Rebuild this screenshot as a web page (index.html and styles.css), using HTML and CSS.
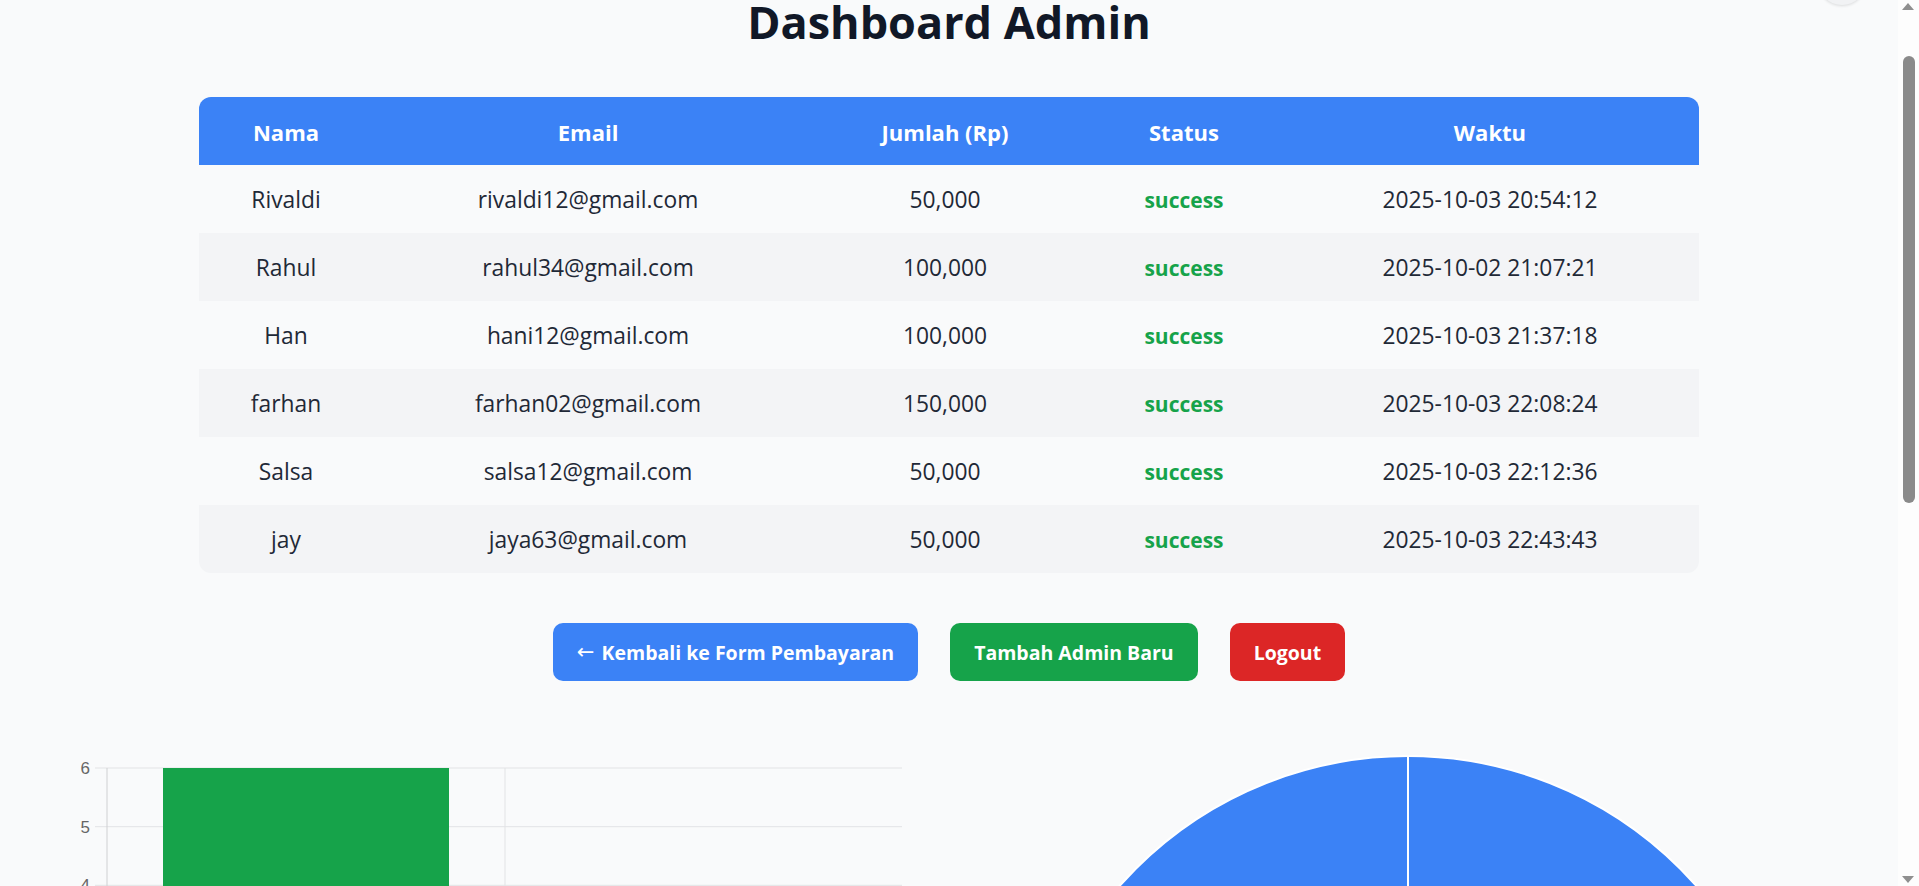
FILE: index.html
```html
<!DOCTYPE html>
<html lang="id">
<head>
<meta charset="utf-8">
<title>Dashboard Admin</title>
<link rel="stylesheet" href="styles.css">
</head>
<body>
<div class="corner-btn" aria-hidden="true"></div>

<h1 class="title">Dashboard Admin</h1>

<div class="table-wrap">
  <table class="data-table">
    <colgroup>
      <col class="c-nama"><col class="c-email"><col class="c-jumlah"><col class="c-status"><col class="c-waktu">
    </colgroup>
    <thead>
      <tr><th>Nama</th><th>Email</th><th>Jumlah (Rp)</th><th>Status</th><th>Waktu</th></tr>
    </thead>
    <tbody>
      <tr><td>Rivaldi</td><td>rivaldi12@gmail.com</td><td>50,000</td><td class="status">success</td><td>2025-10-03 20:54:12</td></tr>
      <tr><td>Rahul</td><td>rahul34@gmail.com</td><td>100,000</td><td class="status">success</td><td>2025-10-02 21:07:21</td></tr>
      <tr><td>Han</td><td>hani12@gmail.com</td><td>100,000</td><td class="status">success</td><td>2025-10-03 21:37:18</td></tr>
      <tr><td>farhan</td><td>farhan02@gmail.com</td><td>150,000</td><td class="status">success</td><td>2025-10-03 22:08:24</td></tr>
      <tr><td>Salsa</td><td>salsa12@gmail.com</td><td>50,000</td><td class="status">success</td><td>2025-10-03 22:12:36</td></tr>
      <tr><td>jay</td><td>jaya63@gmail.com</td><td>50,000</td><td class="status">success</td><td>2025-10-03 22:43:43</td></tr>
    </tbody>
  </table>
</div>

<div class="actions">
  <a class="btn btn-blue" href="#"><span class="arrow">←</span> Kembali ke Form Pembayaran</a>
  <a class="btn btn-green" href="#">Tambah Admin Baru</a>
  <a class="btn btn-red" href="#">Logout</a>
</div>

<div class="charts">
  <div class="chart chart-bar">
    <svg class="chart-svg" width="845" height="422" viewBox="0 0 845 422">
      <g class="grid">
        <line x1="35" y1="28" x2="842" y2="28"/>
        <line x1="35" y1="86.7" x2="842" y2="86.7"/>
        <line x1="35" y1="145.3" x2="842" y2="145.3"/>
        <line x1="35" y1="204" x2="842" y2="204"/>
        <line x1="35" y1="262.7" x2="842" y2="262.7"/>
        <line x1="35" y1="321.3" x2="842" y2="321.3"/>
        <line x1="445" y1="28" x2="445" y2="388"/>
      </g>
      <line class="axis" x1="47" y1="28" x2="47" y2="388"/>
      <line class="axis" x1="47" y1="380" x2="842" y2="380"/>
      <rect class="bar" x="103" y="28" width="286" height="352"/>
      <g class="ticks">
        <text x="30" y="34">6</text>
        <text x="30" y="92.7">5</text>
        <text x="30" y="151.3">4</text>
        <text x="30" y="210">3</text>
        <text x="30" y="268.7">2</text>
        <text x="30" y="327.3">1</text>
        <text x="30" y="386">0</text>
      </g>
      <g class="cats">
        <text x="246" y="408">success</text>
        <text x="643" y="408">pending</text>
      </g>
    </svg>
  </div>
  <div class="chart chart-pie">
    <svg class="chart-svg" width="845" height="800" viewBox="0 0 845 800">
      <circle class="pie" cx="422" cy="401" r="385"/>
      <line class="pie-sep" x1="422" y1="401" x2="422" y2="15"/>
    </svg>
  </div>
</div>

<div class="scrollbar" aria-hidden="true">
  <svg class="sb-arrow" width="21" height="12" viewBox="0 0 21 12"><polygon points="4,10 16,10 10,3"/></svg>
  <div class="sb-thumb"></div>
  <svg class="sb-arrow sb-down" width="21" height="12" viewBox="0 0 21 12"><polygon points="4,2 16,2 10,9"/></svg>
</div>

<script src="script.js"></script>
</body>
</html>
```

FILE: styles.css
```css
html {
  scroll-behavior: auto;
}

body {
  position: relative;
  margin: 0;
  padding: 70px 21px 70px 0;
  background: #f9fafb;
  font-family: "Open Sans", "Noto Sans", sans-serif;
  color: #1f2937;
}

.corner-btn {
  position: absolute;
  top: 32px;
  right: 53px;
  width: 48px;
  height: 48px;
  border-radius: 50%;
  background: #f1f2f4;
  box-shadow: 0 1px 3px rgba(0, 0, 0, 0.12);
}

.title {
  margin: 0 0 48px;
  font-size: 45px;
  line-height: 54px;
  font-weight: 700;
  text-align: center;
  color: #111827;
}

.table-wrap {
  max-width: 1500px;
  margin: 0 auto;
  border-radius: 12px;
  overflow: hidden;
}

.data-table {
  width: 100%;
  border-collapse: separate;
  border-spacing: 0;
  table-layout: fixed;
}

.c-nama { width: 11.6%; }
.c-email { width: 28.67%; }
.c-jumlah { width: 18.93%; }
.c-status { width: 12.93%; }
.c-waktu { width: 27.87%; }

.data-table th,
.data-table td {
  padding: 21px 8px 19px;
  line-height: 28px;
  text-align: center;
  white-space: nowrap;
}

.data-table th {
  background: #3b82f6;
  color: #ffffff;
  font-size: 22px;
  font-weight: 700;
}

.data-table td {
  font-size: 22.8px;
  color: #1f2937;
}

.data-table tbody tr:nth-child(even) td {
  background: #f3f4f6;
}

.data-table td.status {
  color: #16a34a;
  font-weight: 700;
  font-size: 21px;
}

.actions {
  display: flex;
  justify-content: center;
  gap: 32px;
  margin-top: 50px;
}

.btn {
  display: inline-flex;
  align-items: center;
  height: 58px;
  padding: 0 24px;
  box-sizing: border-box;
  border-radius: 10px;
  font-size: 19.5px;
  font-weight: 700;
  color: #ffffff;
  text-decoration: none;
  white-space: pre;
}

.arrow {
  font-family: "DejaVu Sans", sans-serif;
  font-weight: 400;
  font-size: 21px;
  margin-right: 2px;
}

.btn-blue { background: #3b82f6; }
.btn-green { background: #16a34a; }
.btn-red { background: #dc2626; }

.charts {
  display: flex;
  justify-content: space-between;
  align-items: flex-start;
  margin-top: 59px;
  padding: 0 67px 0 60px;
}

.chart-svg {
  display: block;
}

.grid line {
  stroke: #e2e3e5;
  stroke-width: 1;
}

.axis {
  stroke: #cfd0d2;
  stroke-width: 1;
}

.bar {
  fill: #16a34a;
}

.ticks text {
  font-family: "Liberation Sans", Arial, sans-serif;
  font-size: 17px;
  fill: #666666;
  text-anchor: end;
}

.cats text {
  font-family: "Liberation Sans", Arial, sans-serif;
  font-size: 17px;
  fill: #666666;
  text-anchor: middle;
}

.pie {
  fill: #3b82f6;
  stroke: #ffffff;
  stroke-width: 2;
}

.pie-sep {
  stroke: #ffffff;
  stroke-width: 2;
}

.scrollbar {
  position: fixed;
  top: 0;
  right: 0;
  width: 21px;
  height: 100vh;
  display: flex;
  flex-direction: column;
  background: #fdfdfd;
}

.sb-arrow {
  display: block;
  flex: none;
}

.sb-arrow polygon {
  fill: #8f8f8f;
}

.sb-thumb {
  flex: none;
  height: 447px;
  width: 12px;
  margin: 44px 0 0 5px;
  border-radius: 6px;
  background: #8a8a8a;
}

.sb-down {
  margin-top: auto;
}
```

FILE: script.js
```js
window.scrollTo(0, 75);
window.addEventListener('load', function () {
  window.scrollTo(0, 75);
});
```
